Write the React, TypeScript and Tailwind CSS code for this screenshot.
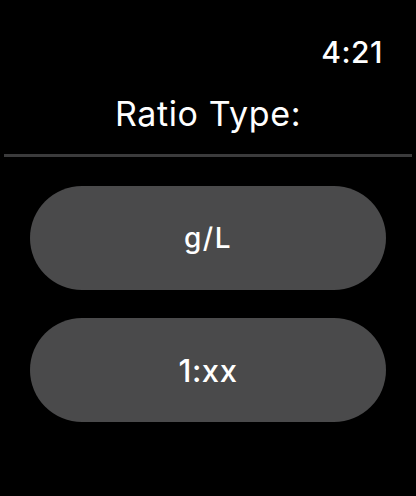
const options = [
  { label: "g/L", size: "text-[28px] tracking-[1.5px]" },
  { label: "1:xx", size: "text-[31px] tracking-[0.5px]" },
];

export default function App() {
  return (
    <div className="w-[416px] h-[496px] bg-black text-white font-['Inter','Liberation_Sans',sans-serif] flex flex-col pt-[37px]">
      <div className="flex justify-end pr-[33px]">
        <span className="text-[30px] leading-[30px] font-medium tracking-[0.5px]">4:21</span>
      </div>
      <h1 className="mt-[30px] text-center text-[34px] leading-[33px] font-normal tracking-[0.6px]">Ratio Type:</h1>
      <div className="mt-[24px] mx-[4px] h-[3px] bg-[#3b3b3c]" />
      <div className="mt-[29px] mx-[30px] flex flex-col gap-[28px]">
        {options.map((o) => (
          <button
            key={o.label}
            className="h-[104px] rounded-[52px] bg-[#4a4a4b] flex items-center justify-center"
          >
            <span className={`${o.size} leading-none font-medium`}>{o.label}</span>
          </button>
        ))}
      </div>
    </div>
  );
}
